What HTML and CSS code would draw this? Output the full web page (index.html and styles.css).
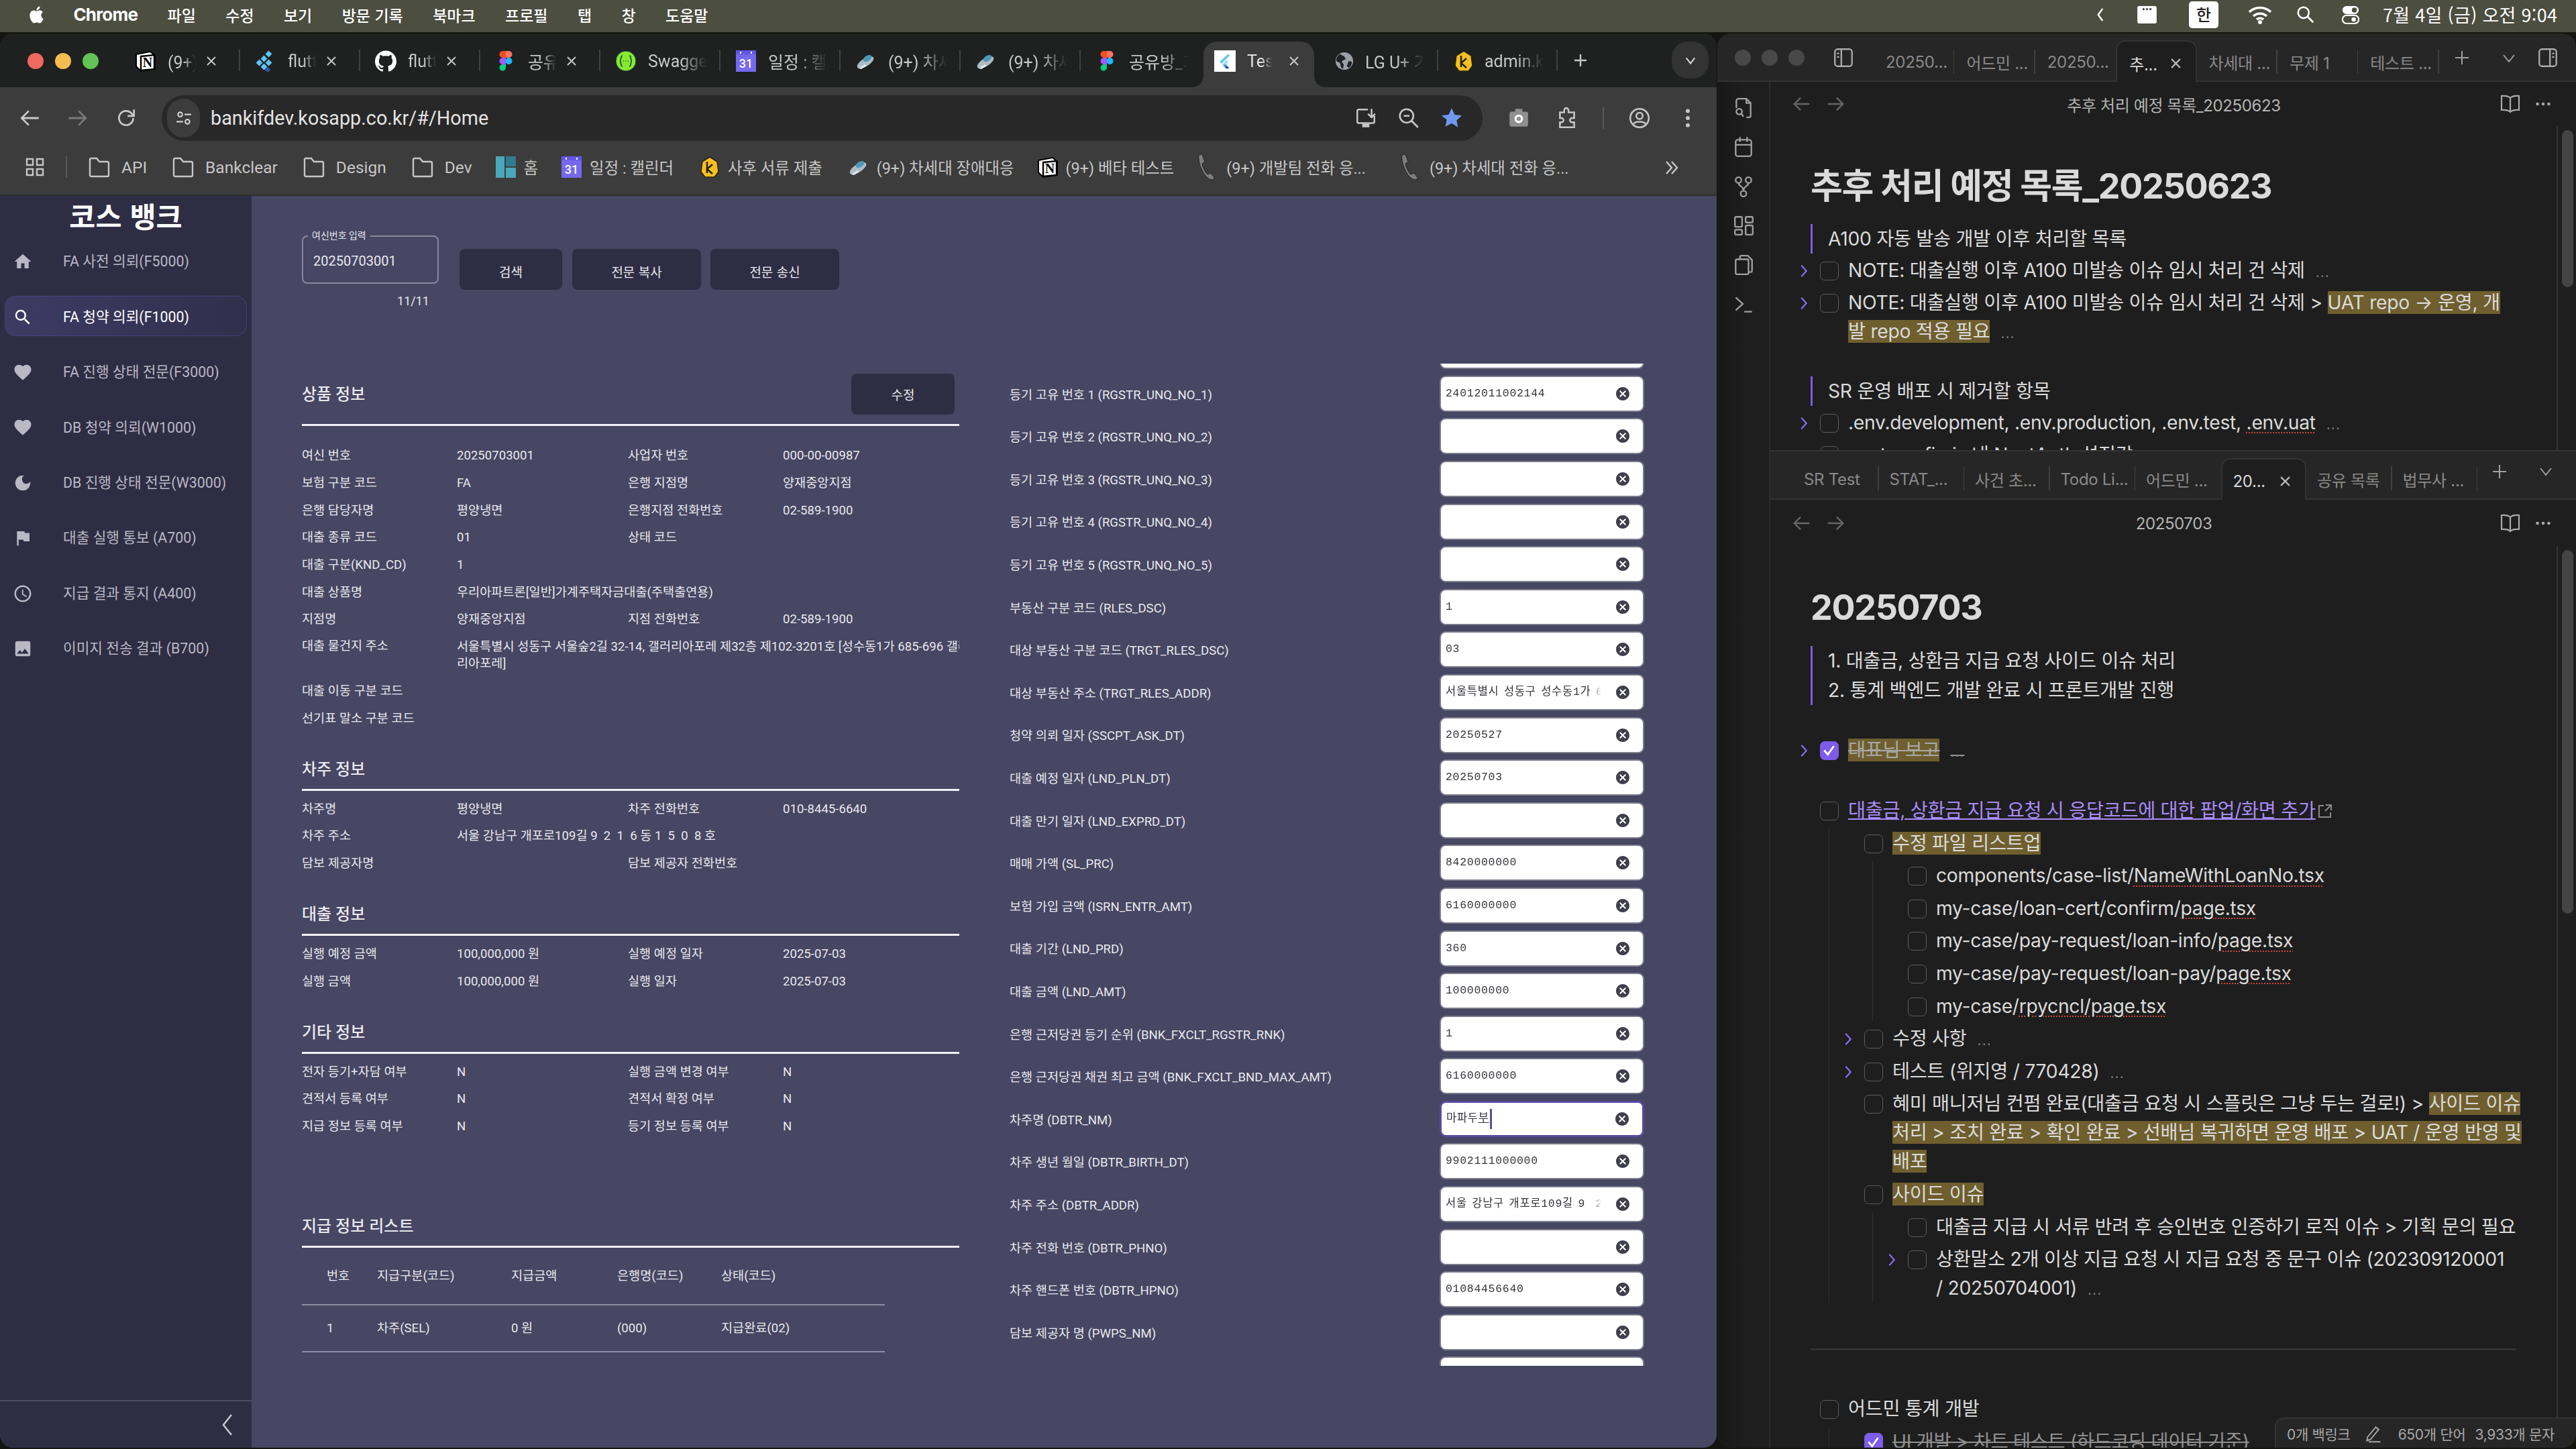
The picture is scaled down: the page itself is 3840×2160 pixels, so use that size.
FILE: index.html
```html
<!DOCTYPE html>
<html lang="ko">
<head>
<meta charset="utf-8">
<title>코스 뱅크</title>
<link rel="stylesheet" href="styles.css">
</head>
<body>
<svg class="defs" aria-hidden="true">
  <symbol id="x" viewBox="0 0 16 16"><path d="M2 2l12 12M14 2L2 14" fill="none" stroke="currentColor" stroke-width="2"/></symbol>
  <symbol id="folder" viewBox="0 0 32 32"><path d="M2 5a2 2 0 0 1 2-2h8l4 5h12a2 2 0 0 1 2 2v18a2 2 0 0 1-2 2H4a2 2 0 0 1-2-2z" fill="none" stroke="#c7c7c7" stroke-width="2.400"/></symbol>
  <symbol id="notion" viewBox="0 0 32 32"><path d="M2 6l21-4 7 6v20l-21 3-7-7z" fill="#fff" stroke="#000" stroke-width="2"/><path d="M9 9l20-2v21l-20 2z" fill="#fff" stroke="#000" stroke-width="2.400"/><text x="19" y="25" class="n-glyph">N</text></symbol>
  <symbol id="flutter" viewBox="0 0 32 32"><g fill="#5cc4f5"><rect x="17" y="2" width="7" height="7" transform="rotate(45 20.500 5.500)"/><rect x="10" y="9" width="7" height="7" transform="rotate(45 13.500 12.500)"/><rect x="3" y="15" width="7" height="7" transform="rotate(45 6.500 18.500)"/><rect x="17" y="15" width="7" height="7" transform="rotate(45 20.500 18.500)"/><rect x="10" y="21" width="7" height="7" transform="rotate(45 13.500 24.500)"/></g><rect x="16" y="26" width="6" height="6" fill="#2d5aa8" transform="rotate(45 19 29)"/></symbol>
  <symbol id="flutter2" viewBox="0 0 32 32"><rect width="32" height="32" fill="#fff"/><path d="M21 5L8 17l3 3L23 8z" fill="#6cc5f2"/><path d="M19 14l-7 7 3 3 6-6z" fill="#a7dcf7"/><path d="M13 22l4 5h5l-4-6z" fill="#4a90d9"/><path d="M17 27h5l-1-2-3-1z" fill="#123a7a"/></symbol>
  <symbol id="github" viewBox="0 0 24 24"><path fill="#fff" d="M12 .297c-6.630 0-12 5.373-12 12 0 5.303 3.438 9.800 8.205 11.385.6.113.82-.258.82-.577 0-.285-.01-1.040-.015-2.040-3.338.724-4.042-1.610-4.042-1.610C4.422 18.070 3.633 17.700 3.633 17.700c-1.087-.744.084-.729.084-.729 1.205.084 1.838 1.236 1.838 1.236 1.070 1.835 2.809 1.305 3.495.998.108-.776.417-1.305.76-1.605-2.665-.3-5.466-1.332-5.466-5.930 0-1.310.465-2.380 1.235-3.220-.135-.303-.54-1.523.105-3.176 0 0 1.005-.322 3.300 1.230.96-.267 1.980-.399 3-.405 1.020.006 2.040.138 3 .405 2.280-1.552 3.285-1.230 3.285-1.230.645 1.653.24 2.873.12 3.176.765.84 1.230 1.910 1.230 3.220 0 4.610-2.805 5.625-5.475 5.920.42.36.81 1.096.81 2.220 0 1.606-.015 2.896-.015 3.286 0 .315.21.69.825.57C20.565 22.092 24 17.592 24 12.297c0-6.627-5.373-12-12-12"/></symbol>
  <symbol id="figma" viewBox="0 0 20 32"><path d="M10 1H5.500a5 5 0 0 0 0 10H10z" fill="#f24e1e"/><path d="M10 1h4.500a5 5 0 0 1 0 10H10z" fill="#ff7262"/><path d="M10 11H5.500a5 5 0 0 0 0 10H10z" fill="#a259ff"/><circle cx="14.500" cy="16" r="5" fill="#1abcfe"/><path d="M5.500 21H10v5a4.800 4.800 0 1 1-4.500-5z" fill="#0acf83"/></symbol>
  <symbol id="swagger" viewBox="0 0 32 32"><circle cx="16" cy="16" r="15" fill="#85ea2d" stroke="#173647" stroke-width="1"/><path d="M11 8c-3 0-2 5-3 7-.5 1-1 1-1 1s.5 0 1 1c1 2 0 7 3 7M21 8c3 0 2 5 3 7 .5 1 1 1 1 1s-.5 0-1 1c-1 2 0 7-3 7M12 16h1M15.500 16h1M19 16h1" fill="none" stroke="#173647" stroke-width="1.600"/></symbol>
  <symbol id="calendar" viewBox="0 0 32 32"><rect x="1" y="0" width="30" height="32" fill="#6255e6"/><rect x="1" y="6" width="30" height="26" fill="#7569ef"/><rect x="7" y="2" width="2" height="3" fill="#fff"/><rect x="23" y="2" width="2" height="3" fill="#fff"/><text x="16" y="26" class="cal-glyph">31</text></symbol>
  <symbol id="kakao" viewBox="0 0 28 32"><path d="M14 1l11 7 2 15-6 8H7l-6-8 2-15z" fill="#f6c021" stroke="#2a2411" stroke-width="1.500"/><path d="M10 8v17M18 12l-8 7 8 7" fill="none" stroke="#2a2411" stroke-width="2.600"/></symbol>
  <symbol id="ufo" viewBox="0 0 32 32"><ellipse cx="15" cy="18" rx="14" ry="6" fill="#aebcc4" transform="rotate(-32 15 18)"/><ellipse cx="18" cy="12" rx="7" ry="4" fill="#4f96b8" transform="rotate(-32 18 12)"/><path d="M5 27l9-6 3 2-8 5z" fill="#e4eaed"/></symbol>
  <symbol id="phone" viewBox="0 0 32 40"><path d="M3 2l5-1 4 11-4 3c1 6 4 12 8 16l5-2 6 8-4 2C12 39 1 15 3 2z" fill="#7d7d7d" stroke="#222" stroke-width="1"/></symbol>
  <symbol id="home-logo" viewBox="0 0 30 32"><rect x="0" y="0" width="13" height="32" fill="#4aa8bb"/><rect x="15" y="0" width="15" height="15" fill="#2f7b90"/><rect x="15" y="17" width="15" height="15" fill="#4aa8bb"/></symbol>
  <symbol id="globe" viewBox="0 0 30 32"><circle cx="15" cy="16" r="14" fill="#9aa0a6"/><path d="M8 5c4 2 7 3 9 7-1 3-5 2-6 5l3 5-1 6-3-1-2-8-6-3c0-5 2-9 6-11zM22 16l5 1c0 5-2 8-5 10l-3-3z" fill="#202124"/></symbol>
  <symbol id="back" viewBox="0 0 32 32"><path d="M28 16H5M14 6L4 16l10 10" fill="none" stroke="currentColor" stroke-width="2.600"/></symbol>
  <symbol id="fwd" viewBox="0 0 32 32"><path d="M4 16h23M18 6l10 10-10 10" fill="none" stroke="currentColor" stroke-width="2.600"/></symbol>
  <symbol id="ob-left" viewBox="0 0 32 32"><path d="M24 4H8a4 4 0 0 0-4 4v16a4 4 0 0 0 4 4h16a4 4 0 0 0 4-4V8a4 4 0 0 0-4-4zM13 4v24M7 10h3M7 15h3" fill="none" stroke="currentColor" stroke-width="2.200"/></symbol>
  <symbol id="ob-right" viewBox="0 0 32 32"><path d="M8 4h16a4 4 0 0 1 4 4v16a4 4 0 0 1-4 4H8a4 4 0 0 1-4-4V8a4 4 0 0 1 4-4zM19 4v24M22 10h3M22 15h3" fill="none" stroke="currentColor" stroke-width="2.200"/></symbol>
  <symbol id="book" viewBox="0 0 32 32"><path d="M16 7C13 4 8 3.500 3 4v21c5-.5 10 0 13 3 3-3 8-3.500 13-3V4c-5-.5-10 0-13 3zM16 7v21" fill="none" stroke="currentColor" stroke-width="2.200"/></symbol>
  <symbol id="dots" viewBox="0 0 32 32"><circle cx="7" cy="16" r="2.500" fill="currentColor"/><circle cx="16" cy="16" r="2.500" fill="currentColor"/><circle cx="25" cy="16" r="2.500" fill="currentColor"/></symbol>
  <symbol id="chev" viewBox="0 0 14 24"><path d="M3 3l8 9-8 9" fill="none" stroke="#8b6cf0" stroke-width="2.400"/></symbol>
  <symbol id="check" viewBox="0 0 28 28"><path d="M6 14l6 7 10-14" fill="none" stroke="#fff" stroke-width="3.200"/></symbol>
  <symbol id="clear" viewBox="0 0 24 24"><path fill="#403f4c" d="M12 2C6.470 2 2 6.470 2 12s4.470 10 10 10 10-4.470 10-10S17.530 2 12 2zm5 13.590L15.590 17 12 13.410 8.410 17 7 15.590 10.590 12 7 8.410 8.410 7 12 10.590 15.590 7 17 8.410 13.410 12 17 15.590z"/></symbol>
</svg>

<header class="menubar">
  <svg class="apple" viewBox="0 0 24 24"><path fill="#fff" d="M12.152 6.896c-.948 0-2.415-1.078-3.960-1.040-2.040.027-3.910 1.183-4.961 3.014-2.117 3.675-.546 9.103 1.519 12.090 1.013 1.454 2.208 3.090 3.792 3.039 1.520-.065 2.090-.987 3.935-.987 1.831 0 2.350.987 3.960.948 1.637-.026 2.676-1.480 3.676-2.948 1.156-1.688 1.636-3.325 1.662-3.415-.039-.013-3.182-1.221-3.220-4.857-.026-3.040 2.480-4.494 2.597-4.559-1.429-2.090-3.623-2.324-4.390-2.376-2-.156-3.675 1.090-4.610 1.090zM15.530 3.830c.843-1.012 1.400-2.427 1.245-3.830-1.207.052-2.662.805-3.532 1.818-.780.896-1.454 2.338-1.273 3.714 1.338.104 2.715-.688 3.559-1.701"/></svg>
  <span class="menu-app">Chrome</span>
  <span>파일</span><span>수정</span><span>보기</span><span>방문 기록</span><span>북마크</span><span>프로필</span><span>탭</span><span>창</span><span>도움말</span>
  <div class="status">
    <svg class="st-i st-chev" viewBox="0 0 16 32"><path d="M12 5L4 16l8 11" fill="none" stroke="#fff" stroke-width="3"/></svg>
    <svg class="st-i st-box" viewBox="0 0 31 28"><rect width="31" height="28" rx="3" fill="#fff"/><circle cx="10" cy="5" r="1.800" fill="#444"/><circle cx="15.500" cy="5" r="1.800" fill="#444"/><circle cx="21" cy="5" r="1.800" fill="#444"/></svg>
    <span class="st-han">한</span>
    <svg class="st-i st-wifi" viewBox="0 0 36 30"><path d="M2 11a23 23 0 0 1 32 0M8 17a15 15 0 0 1 20 0M13 22a8 8 0 0 1 10 0" fill="none" stroke="#fff" stroke-width="3.600"/><circle cx="18" cy="26" r="3" fill="#fff"/></svg>
    <svg class="st-i st-search" viewBox="0 0 30 30"><circle cx="12" cy="12" r="9" fill="none" stroke="#fff" stroke-width="2.800"/><path d="M19 19l9 9" stroke="#fff" stroke-width="3.200"/></svg>
    <svg class="st-i st-ctl" viewBox="0 0 30 30"><rect x="2" y="1" width="26" height="13" rx="6.500" fill="#fff"/><circle cx="21" cy="7.500" r="4" fill="#4c4e40"/><rect x="2" y="16" width="26" height="13" rx="6.500" fill="none" stroke="#fff" stroke-width="2.400"/><circle cx="20" cy="22.500" r="3.500" fill="#fff"/></svg>
    <span class="st-clock">7월 4일 (금) 오전 9:04</span>
  </div>
</header>

<div class="window chrome">
  <div class="tabstrip">
    <div class="lights"><i class="l-red"></i><i class="l-yel"></i><i class="l-grn"></i></div>
    <div class="tab"><svg class="fav"><use href="#notion"/></svg><span class="t-text">(9+) 베타 테스트</span><svg class="t-x"><use href="#x"/></svg></div>
    <div class="tab"><svg class="fav"><use href="#flutter"/></svg><span class="t-text">flutter</span><svg class="t-x"><use href="#x"/></svg></div>
    <div class="tab"><svg class="fav"><use href="#github"/></svg><span class="t-text">flutter</span><svg class="t-x"><use href="#x"/></svg></div>
    <div class="tab"><svg class="fav"><use href="#figma"/></svg><span class="t-text">공유방_기획</span><svg class="t-x"><use href="#x"/></svg></div>
    <div class="tab"><svg class="fav"><use href="#swagger"/></svg><span class="t-text t-wide">Swagger UI</span></div>
    <div class="tab"><svg class="fav"><use href="#calendar"/></svg><span class="t-text t-wide">일정 : 캘린더</span></div>
    <div class="tab"><svg class="fav"><use href="#ufo"/></svg><span class="t-text t-wide">(9+) 차세대 장애대응</span></div>
    <div class="tab"><svg class="fav"><use href="#ufo"/></svg><span class="t-text t-wide">(9+) 차세대 장애대응</span></div>
    <div class="tab tab--plain"><svg class="fav"><use href="#figma"/></svg><span class="t-text t-wide">공유방_기획</span></div>
    <div class="tab tab--active"><svg class="fav"><use href="#flutter2"/></svg><span class="t-text t-short">Test</span><svg class="t-x"><use href="#x"/></svg></div>
    <div class="tab tab--lg"><svg class="fav"><use href="#globe"/></svg><span class="t-text t-wide">LG U+ 기업</span></div>
    <div class="tab tab--k"><svg class="fav"><use href="#kakao"/></svg><span class="t-text t-wide">admin.kosapp</span></div>
    <svg class="t-plus" viewBox="0 0 24 24"><path d="M12 3v18M3 12h18" stroke="#c7c7c7" stroke-width="2.400"/></svg>
    <div class="t-down"><svg viewBox="0 0 20 20"><path d="M3 6l7 9 7-9" fill="none" stroke="#d0d0d0" stroke-width="2.400"/></svg></div>
  </div>

  <div class="toolbar">
    <svg class="tb-i tb-back"><use href="#back"/></svg>
    <svg class="tb-i tb-fwd"><use href="#fwd"/></svg>
    <svg class="tb-i tb-reload" viewBox="0 0 32 32"><path d="M26 16a10 10 0 1 1-3-7.200L27 13M27 4v9h-9" fill="none" stroke="#c7c7c7" stroke-width="2.600"/></svg>
    <div class="omnibox">
      <span class="omni-site"><svg viewBox="0 0 24 24"><circle cx="7" cy="7" r="3" fill="none" stroke="#d0d0d0" stroke-width="2"/><path d="M13 7h9M2 17h9" stroke="#d0d0d0" stroke-width="2"/><circle cx="17" cy="17" r="3" fill="none" stroke="#d0d0d0" stroke-width="2"/></svg></span>
      <span class="omni-url">bankifdev.kosapp.co.kr/#/Home</span>
      <span class="omni-icons">
        <svg viewBox="0 0 32 32"><path d="M19 4H6a2 2 0 0 0-2 2v15a2 2 0 0 0 2 2h20a2 2 0 0 0 2-2V13M24 3v12M19 10l5 5 5-5" fill="none" stroke="#c7c7c7" stroke-width="2.400"/><path d="M11 24h10v5H11z" fill="#c7c7c7"/></svg>
        <svg viewBox="0 0 32 32"><circle cx="13" cy="13" r="9.500" fill="none" stroke="#c7c7c7" stroke-width="2.400"/><path d="M20 20l9 9" stroke="#c7c7c7" stroke-width="2.600"/><path d="M9 13h8" stroke="#c7c7c7" stroke-width="2.400"/></svg>
        <svg viewBox="0 0 32 32"><path d="M16 2l4.300 9.200 10 1.200-7.400 6.800 2 9.800L16 23.200 7.100 28l2-9.800L1.700 12.400l10-1.200z" fill="#6e99ee"/></svg>
      </span>
    </div>
    <svg class="tb-i tb-cam" viewBox="0 0 32 32"><rect x="3" y="7" width="26" height="21" rx="3" fill="#8f8f8f"/><rect x="11" y="3" width="10" height="6" rx="1" fill="#8f8f8f"/><circle cx="16" cy="17" r="6" fill="#fff"/><circle cx="16" cy="17" r="3" fill="#8f8f8f"/></svg>
    <svg class="tb-i tb-ext" viewBox="0 0 32 32"><path d="M6 8h6V5a3 3 0 0 1 6 0v3h8v8h-3a3 3 0 0 0 0 6h3v7H6v-7h2a3 3 0 0 0 0-6H6z" fill="none" stroke="#c7c7c7" stroke-width="2.400"/></svg>
    <span class="tb-sep"></span>
    <svg class="tb-i tb-prof" viewBox="0 0 32 32"><circle cx="16" cy="16" r="13" fill="none" stroke="#c7c7c7" stroke-width="2.400"/><circle cx="16" cy="13" r="4.500" fill="none" stroke="#c7c7c7" stroke-width="2.400"/><path d="M7 25c2-5 16-5 18 0" fill="none" stroke="#c7c7c7" stroke-width="2.400"/></svg>
    <svg class="tb-i tb-more" viewBox="0 0 32 32"><circle cx="16" cy="6" r="2.800" fill="#c7c7c7"/><circle cx="16" cy="16" r="2.800" fill="#c7c7c7"/><circle cx="16" cy="26" r="2.800" fill="#c7c7c7"/></svg>
  </div>

  <div class="bookmarks">
    <svg class="bm-apps" viewBox="0 0 28 28"><g fill="none" stroke="#c7c7c7" stroke-width="2.400"><rect x="2" y="2" width="9" height="9"/><rect x="17" y="2" width="9" height="9"/><rect x="2" y="17" width="9" height="9"/><rect x="17" y="17" width="9" height="9"/></g></svg>
    <span class="bm-sep"></span>
    <span class="bm"><svg class="bm-f"><use href="#folder"/></svg>API</span>
    <span class="bm"><svg class="bm-f"><use href="#folder"/></svg>Bankclear</span>
    <span class="bm"><svg class="bm-f"><use href="#folder"/></svg>Design</span>
    <span class="bm bm--tight"><svg class="bm-f"><use href="#folder"/></svg>Dev</span>
    <span class="bm bm--tight bm--logo"><svg class="bm-f"><use href="#home-logo"/></svg>홈</span>
    <span class="bm bm--logo"><svg class="bm-f"><use href="#calendar"/></svg>일정 : 캘린더</span>
    <span class="bm bm--logo"><svg class="bm-f"><use href="#kakao"/></svg>사후 서류 제출</span>
    <span class="bm bm--tight bm--logo"><svg class="bm-f"><use href="#ufo"/></svg>(9+) 차세대 장애대응</span>
    <span class="bm bm--tight bm--logo"><svg class="bm-f"><use href="#notion"/></svg>(9+) 베타 테스트</span>
    <span class="bm bm--long bm--logo"><svg class="bm-f bm-ph"><use href="#phone"/></svg>(9+) 개발팀 전화 응...</span>
    <span class="bm bm--logo"><svg class="bm-f bm-ph"><use href="#phone"/></svg>(9+) 차세대 전화 응...</span>
    <svg class="bm-more" viewBox="0 0 24 24"><path d="M5 3l8 9-8 9M13 3l8 9-8 9" fill="none" stroke="#c7c7c7" stroke-width="2.400"/></svg>
  </div>

  <div class="app">
    <aside class="side">
      <h1 class="side-title">코스 뱅크</h1>
      <nav class="side-nav">
        <a class="nav"><svg viewBox="0 0 24 24"><path d="M10 20v-6h4v6h5v-8h3L12 3 2 12h3v8z"/></svg>FA 사전 의뢰(F5000)</a>
        <a class="nav nav--on"><svg viewBox="0 0 24 24"><path d="M15.500 14h-.79l-.28-.27A6.471 6.471 0 0 0 16 9.500 6.500 6.500 0 1 0 9.500 16c1.610 0 3.090-.59 4.230-1.570l.27.28v.79l5 4.990L20.490 19l-4.990-5zm-6 0C7.010 14 5 11.990 5 9.500S7.010 5 9.500 5 14 7.010 14 9.500 11.990 14 9.500 14z"/></svg>FA 청약 의뢰(F1000)</a>
        <a class="nav"><svg viewBox="0 0 24 24"><path d="M12 21.350l-1.450-1.320C5.400 15.360 2 12.280 2 8.500 2 5.420 4.420 3 7.500 3c1.740 0 3.410.81 4.500 2.090C13.090 3.810 14.760 3 16.500 3 19.580 3 22 5.420 22 8.500c0 3.780-3.400 6.860-8.550 11.540L12 21.350z"/></svg>FA 진행 상태 전문(F3000)</a>
        <a class="nav"><svg viewBox="0 0 24 24"><path d="M12 21.350l-1.450-1.320C5.400 15.360 2 12.280 2 8.500 2 5.420 4.420 3 7.500 3c1.740 0 3.410.81 4.500 2.090C13.090 3.810 14.760 3 16.500 3 19.580 3 22 5.420 22 8.500c0 3.780-3.400 6.860-8.550 11.540L12 21.350z"/></svg>DB 청약 의뢰(W1000)</a>
        <a class="nav"><svg viewBox="0 0 24 24"><path d="M12 3a9 9 0 1 0 9 9c0-.46-.04-.92-.1-1.360a5.389 5.389 0 0 1-4.400 2.260 5.403 5.403 0 0 1-3.140-9.800c-.44-.06-.9-.1-1.360-.1z"/></svg>DB 진행 상태 전문(W3000)</a>
        <a class="nav"><svg viewBox="0 0 24 24"><path d="M14.400 6L14 4H5v17h2v-7h5.600l.4 2h7V6z"/></svg>대출 실행 통보 (A700)</a>
        <a class="nav"><svg viewBox="0 0 24 24"><path d="M11.990 2C6.470 2 2 6.480 2 12s4.470 10 9.990 10C17.520 22 22 17.520 22 12S17.520 2 11.990 2zM12 20c-4.420 0-8-3.580-8-8s3.580-8 8-8 8 3.580 8 8-3.580 8-8 8zm.5-13H11v6l5.250 3.150.75-1.230-4.500-2.670z"/></svg>지급 결과 통지 (A400)</a>
        <a class="nav"><svg viewBox="0 0 24 24"><path d="M21 19V5c0-1.100-.9-2-2-2H5c-1.100 0-2 .9-2 2v14c0 1.100.9 2 2 2h14c1.100 0 2-.9 2-2zM8.500 13.500l2.500 3.010L14.500 12l4.500 6H5l3.500-4.500z"/></svg>이미지 전송 결과 (B700)</a>
      </nav>
      <div class="side-foot"><svg viewBox="0 0 20 36"><path d="M16 3L4 18l12 15" fill="none" stroke="#c5c4ce" stroke-width="2.600"/></svg></div>
    </aside>

    <main class="main">
      <div class="col-left">
        <div class="search">
          <div class="search-box">
            <div class="outlined"><span class="legend">여신번호 입력</span>20250703001</div>
            <div class="counter">11/11</div>
          </div>
          <button class="btn btn--a">검색</button>
          <button class="btn btn--b">전문 복사</button>
          <button class="btn btn--b">전문 송신</button>
        </div>

        <section>
          <div class="sec-head sec-head--btn"><span>상품 정보</span><button class="btn btn--edit">수정</button></div>
          <div class="kv kv--first">
            <span>여신 번호</span><span>20250703001</span><span>사업자 번호</span><span>000-00-00987</span>
            <span>보험 구분 코드</span><span>FA</span><span>은행 지점명</span><span>양재중앙지점</span>
            <span>은행 담당자명</span><span>평양냉면</span><span>은행지점 전화번호</span><span>02-589-1900</span>
            <span>대출 종류 코드</span><span>01</span><span>상태 코드</span><span></span>
            <span>대출 구분(KND_CD)</span><span>1</span><span></span><span></span>
            <span>대출 상품명</span><span class="wide">우리아파트론[일반]가계주택자금대출(주택출연용)</span>
            <span>지점명</span><span>양재중앙지점</span><span>지점 전화번호</span><span>02-589-1900</span>
            <span class="top">대출 물건지 주소</span><span class="wide addr">서울특별시 성동구 서울숲2길 32-14, 갤러리아포레 제32층 제102-3201호 [성수동1가 685-696 갤러<br>리아포레]</span>
            <span>대출 이동 구분 코드</span><span class="wide"></span>
            <span>선기표 말소 구분 코드</span><span class="wide"></span>
          </div>
        </section>

        <section class="sec">
          <div class="sec-head"><span>차주 정보</span></div>
          <div class="kv">
            <span>차주명</span><span>평양냉면</span><span>차주 전화번호</span><span>010-8445-6640</span>
            <span>차주 주소</span><span class="wide">서울 강남구 개포로109길 9 &nbsp;2 &nbsp;1 &nbsp;6 동 1 &nbsp;5 &nbsp;0 &nbsp;8 호</span>
            <span>담보 제공자명</span><span></span><span>담보 제공자 전화번호</span><span></span>
          </div>
        </section>

        <section class="sec">
          <div class="sec-head"><span>대출 정보</span></div>
          <div class="kv">
            <span>실행 예정 금액</span><span>100,000,000 원</span><span>실행 예정 일자</span><span>2025-07-03</span>
            <span>실행 금액</span><span>100,000,000 원</span><span>실행 일자</span><span>2025-07-03</span>
          </div>
        </section>

        <section class="sec">
          <div class="sec-head"><span>기타 정보</span></div>
          <div class="kv">
            <span>전자 등기+자담 여부</span><span>N</span><span>실행 금액 변경 여부</span><span>N</span>
            <span>견적서 등록 여부</span><span>N</span><span>견적서 확정 여부</span><span>N</span>
            <span>지급 정보 등록 여부</span><span>N</span><span>등기 정보 등록 여부</span><span>N</span>
          </div>
        </section>

        <section class="sec sec--list">
          <div class="sec-head"><span>지급 정보 리스트</span></div>
          <div class="tbl tbl--head"><span>번호</span><span>지급구분(코드)</span><span>지급금액</span><span>은행명(코드)</span><span>상태(코드)</span></div>
          <div class="tbl"><span>1</span><span>차주(SEL)</span><span>0 원</span><span>(000)</span><span>지급완료(02)</span></div>
        </section>
      </div>

      <div class="col-right">
        <div class="form">
          <div class="frow"><label>등기 고유 번호 (RGSTR_UNQ_NO)</label><div class="field"><span class="val"></span></div></div>
          <div class="frow"><label>등기 고유 번호 1 (RGSTR_UNQ_NO_1)</label><div class="field"><span class="val">24012011002144</span><svg class="clr"><use href="#clear"/></svg></div></div>
          <div class="frow"><label>등기 고유 번호 2 (RGSTR_UNQ_NO_2)</label><div class="field"><span class="val"></span><svg class="clr"><use href="#clear"/></svg></div></div>
          <div class="frow"><label>등기 고유 번호 3 (RGSTR_UNQ_NO_3)</label><div class="field"><span class="val"></span><svg class="clr"><use href="#clear"/></svg></div></div>
          <div class="frow"><label>등기 고유 번호 4 (RGSTR_UNQ_NO_4)</label><div class="field"><span class="val"></span><svg class="clr"><use href="#clear"/></svg></div></div>
          <div class="frow"><label>등기 고유 번호 5 (RGSTR_UNQ_NO_5)</label><div class="field"><span class="val"></span><svg class="clr"><use href="#clear"/></svg></div></div>
          <div class="frow"><label>부동산 구분 코드 (RLES_DSC)</label><div class="field"><span class="val">1</span><svg class="clr"><use href="#clear"/></svg></div></div>
          <div class="frow"><label>대상 부동산 구분 코드 (TRGT_RLES_DSC)</label><div class="field"><span class="val">03</span><svg class="clr"><use href="#clear"/></svg></div></div>
          <div class="frow"><label>대상 부동산 주소 (TRGT_RLES_ADDR)</label><div class="field"><span class="val">서울특별시 성동구 성수동1가 685</span><svg class="clr"><use href="#clear"/></svg></div></div>
          <div class="frow"><label>청약 의뢰 일자 (SSCPT_ASK_DT)</label><div class="field"><span class="val">20250527</span><svg class="clr"><use href="#clear"/></svg></div></div>
          <div class="frow"><label>대출 예정 일자 (LND_PLN_DT)</label><div class="field"><span class="val">20250703</span><svg class="clr"><use href="#clear"/></svg></div></div>
          <div class="frow"><label>대출 만기 일자 (LND_EXPRD_DT)</label><div class="field"><span class="val"></span><svg class="clr"><use href="#clear"/></svg></div></div>
          <div class="frow"><label>매매 가액 (SL_PRC)</label><div class="field"><span class="val">8420000000</span><svg class="clr"><use href="#clear"/></svg></div></div>
          <div class="frow"><label>보험 가입 금액 (ISRN_ENTR_AMT)</label><div class="field"><span class="val">6160000000</span><svg class="clr"><use href="#clear"/></svg></div></div>
          <div class="frow"><label>대출 기간 (LND_PRD)</label><div class="field"><span class="val">360</span><svg class="clr"><use href="#clear"/></svg></div></div>
          <div class="frow"><label>대출 금액 (LND_AMT)</label><div class="field"><span class="val">100000000</span><svg class="clr"><use href="#clear"/></svg></div></div>
          <div class="frow"><label>은행 근저당권 등기 순위 (BNK_FXCLT_RGSTR_RNK)</label><div class="field"><span class="val">1</span><svg class="clr"><use href="#clear"/></svg></div></div>
          <div class="frow"><label>은행 근저당권 채권 최고 금액 (BNK_FXCLT_BND_MAX_AMT)</label><div class="field"><span class="val">6160000000</span><svg class="clr"><use href="#clear"/></svg></div></div>
          <div class="frow"><label>차주명 (DBTR_NM)</label><div class="field field--focus"><span class="val"><span class="val-inline">마파두<u>부</u></span><i class="caret"></i></span><svg class="clr"><use href="#clear"/></svg></div></div>
          <div class="frow"><label>차주 생년 월일 (DBTR_BIRTH_DT)</label><div class="field"><span class="val">9902111000000</span><svg class="clr"><use href="#clear"/></svg></div></div>
          <div class="frow"><label>차주 주소 (DBTR_ADDR)</label><div class="field"><span class="val">서울 강남구 개포로109길 9 &nbsp;2</span><svg class="clr"><use href="#clear"/></svg></div></div>
          <div class="frow"><label>차주 전화 번호 (DBTR_PHNO)</label><div class="field"><span class="val"></span><svg class="clr"><use href="#clear"/></svg></div></div>
          <div class="frow"><label>차주 핸드폰 번호 (DBTR_HPNO)</label><div class="field"><span class="val">01084456640</span><svg class="clr"><use href="#clear"/></svg></div></div>
          <div class="frow"><label>담보 제공자 명 (PWPS_NM)</label><div class="field"><span class="val"></span><svg class="clr"><use href="#clear"/></svg></div></div>
          <div class="frow"><label>담보 제공자 번호 (PWPS_NO)</label><div class="field"><span class="val"></span></div></div>
        </div>
      </div>
    </main>
  </div>
</div>

<div class="window obsidian">
  <div class="ob-bar">
    <div class="lights lights--off"><i></i><i></i><i></i></div>
    <svg class="ob-ic ob-panel"><use href="#ob-left"/></svg>
    <div class="ob-tabs">
      <span class="ob-tab">20250...</span><span class="ob-tab">어드민 ...</span><span class="ob-tab ob-tab--pre">20250...</span>
      <span class="ob-tab ob-tab--on">추...<svg class="ob-x"><use href="#x"/></svg></span>
      <span class="ob-tab">차세대 ...</span><span class="ob-tab">무제 1</span><span class="ob-tab">테스트 ...</span>
    </div>
    <svg class="ob-plus" viewBox="0 0 24 24"><path d="M12 2v20M2 12h20" stroke="#a0a0a0" stroke-width="2"/></svg>
    <svg class="ob-down" viewBox="0 0 20 20"><path d="M2 5l8 10 8-10" fill="none" stroke="#a0a0a0" stroke-width="2"/></svg>
    <svg class="ob-ic ob-panel-r"><use href="#ob-right"/></svg>
  </div>
  <div class="ob-body">
    <div class="ribbon">
      <svg viewBox="0 0 32 32"><path d="M8 3h12l6 6v18a2 2 0 0 1-2 2h-4M20 3v6h6M6 16v-9a4 4 0 0 1 2-4" fill="none" stroke="currentColor" stroke-width="2.200"/><circle cx="10" cy="21" r="4" fill="none" stroke="currentColor" stroke-width="2.200"/><path d="M13 24l3 4" stroke="currentColor" stroke-width="2.200"/></svg>
      <svg viewBox="0 0 32 32"><rect x="5" y="6" width="22" height="23" rx="3" fill="none" stroke="currentColor" stroke-width="2.200"/><path d="M11 2v7M21 2v7M5 13h22" stroke="currentColor" stroke-width="2.200"/></svg>
      <svg viewBox="0 0 32 32"><g fill="none" stroke="currentColor" stroke-width="2.200"><circle cx="9" cy="7" r="4"/><circle cx="23" cy="7" r="4"/><circle cx="16" cy="26" r="4"/><path d="M9 11c0 5 7 4 7 11M23 11c0 5-7 4-7 11"/></g></svg>
      <svg viewBox="0 0 32 32"><g fill="none" stroke="currentColor" stroke-width="2.200"><rect x="4" y="4" width="10" height="14" rx="1.500"/><rect x="19" y="4" width="10" height="8" rx="1.500"/><rect x="19" y="16" width="10" height="13" rx="1.500"/><rect x="4" y="22" width="10" height="7" rx="1.500"/></g></svg>
      <svg viewBox="0 0 32 32"><g fill="none" stroke="currentColor" stroke-width="2.200"><path d="M11 8V5a2 2 0 0 1 2-2h9l6 6v15a2 2 0 0 1-2 2h-3"/><rect x="5" y="8" width="18" height="21" rx="2"/></g></svg>
      <svg viewBox="0 0 32 32"><path d="M5 7l10 9-10 9M17 27h11" fill="none" stroke="currentColor" stroke-width="2.200"/></svg>
    </div>
    <div class="panes">
      <section class="pane pane--top">
        <div class="pane-nav">
          <svg class="p-nav"><use href="#back"/></svg><svg class="p-nav"><use href="#fwd"/></svg>
          <span class="p-title">추후 처리 예정 목록_20250623</span>
          <svg class="p-i"><use href="#book"/></svg><svg class="p-i p-dots"><use href="#dots"/></svg>
        </div>
        <div class="doc">
          <h2 class="doc-h">추후 처리 예정 목록_20250623</h2>
          <blockquote class="bq">A100 자동 발송 개발 이후 처리할 목록</blockquote>
          <div class="task"><svg class="chev"><use href="#chev"/></svg><i class="cb"></i><div>NOTE: 대출실행 이후 A100 미발송 이슈 임시 처리 건 삭제<em class="more">...</em></div></div>
          <div class="task"><svg class="chev"><use href="#chev"/></svg><i class="cb"></i><div>NOTE: 대출실행 이후 A100 미발송 이슈 임시 처리 건 삭제 &gt; <mark>UAT repo → 운영, 개<br>발 repo 적용 필요</mark><em class="more">...</em></div></div>
          <blockquote class="bq bq--gap">SR 운영 배포 시 제거할 항목</blockquote>
          <div class="task"><svg class="chev"><use href="#chev"/></svg><i class="cb"></i><div>.env.development, .env.production, .env.test, <span class="sp">.env.uat</span><em class="more">...</em></div></div>
          <div class="task"><span class="chev-gap"></span><i class="cb"></i><div>next.config.js 내 NextAuth 설정값</div></div>
        </div>
        <span class="scroll scroll--top"><i></i></span>
      </section>

      <section class="pane pane--bot">
        <div class="pane-tabs">
          <span class="ob-tab ob-tab--b">SR Test</span><span class="ob-tab ob-tab--b">STAT_...</span><span class="ob-tab ob-tab--b">사건 초...</span><span class="ob-tab ob-tab--b">Todo Li...</span><span class="ob-tab ob-tab--b ob-tab--pre">어드민 ...</span>
          <span class="ob-tab ob-tab--b ob-tab--on">20...<svg class="ob-x"><use href="#x"/></svg></span>
          <span class="ob-tab ob-tab--b">공유 목록</span><span class="ob-tab ob-tab--b">법무사 ...</span>
          <svg class="ob-plus ob-plus--b" viewBox="0 0 24 24"><path d="M12 2v20M2 12h20" stroke="#a0a0a0" stroke-width="2"/></svg>
          <svg class="ob-down ob-down--b" viewBox="0 0 20 20"><path d="M2 5l8 10 8-10" fill="none" stroke="#a0a0a0" stroke-width="2"/></svg>
        </div>
        <div class="pane-nav pane-nav--b">
          <svg class="p-nav"><use href="#back"/></svg><svg class="p-nav"><use href="#fwd"/></svg>
          <span class="p-title">20250703</span>
          <svg class="p-i"><use href="#book"/></svg><svg class="p-i p-dots"><use href="#dots"/></svg>
        </div>
        <div class="doc doc--b">
          <h2 class="doc-h">20250703</h2>
          <blockquote class="bq">1. 대출금, 상환금 지급 요청 사이드 이슈 처리<br>2. 통계 백엔드 개발 완료 시 프론트개발 진행</blockquote>
          <div class="task task--big"><svg class="chev"><use href="#chev"/></svg><i class="cb cb--on"><svg><use href="#check"/></svg></i><div class="done"><mark>대표님 보고</mark><em class="more">...</em></div></div>
          <div class="task task--big"><span class="chev-gap"></span><i class="cb"></i><div><a class="link">대출금, 상환금 지급 요청 시 응답코드에 대한 팝업/화면 추가</a><svg class="ext" viewBox="0 0 24 24"><path d="M10 4H3v17h17v-7M13 3h8v8M21 3l-9 9" fill="none" stroke="#8a8a8a" stroke-width="2"/></svg></div></div>
          <div class="tree">
            <div class="task"><span class="chev-gap"></span><i class="cb"></i><div><mark>수정 파일 리스트업</mark></div></div>
            <div class="tree tree--2">
              <div class="task"><span class="chev-gap"></span><i class="cb"></i><div>components/case-list/<span class="sp">NameWithLoanNo.tsx</span></div></div>
              <div class="task"><span class="chev-gap"></span><i class="cb"></i><div>my-case/loan-cert/confirm/<span class="sp">page.tsx</span></div></div>
              <div class="task"><span class="chev-gap"></span><i class="cb"></i><div>my-case/pay-request/loan-info/<span class="sp">page.tsx</span></div></div>
              <div class="task"><span class="chev-gap"></span><i class="cb"></i><div>my-case/pay-request/loan-pay/<span class="sp">page.tsx</span></div></div>
              <div class="task"><span class="chev-gap"></span><i class="cb"></i><div>my-case/<span class="sp">rpycncl/page.tsx</span></div></div>
            </div>
            <div class="task"><svg class="chev"><use href="#chev"/></svg><i class="cb"></i><div>수정 사항<em class="more">...</em></div></div>
            <div class="task"><svg class="chev"><use href="#chev"/></svg><i class="cb"></i><div>테스트 (위지영 / 770428)<em class="more">...</em></div></div>
            <div class="task"><span class="chev-gap"></span><i class="cb"></i><div>혜미 매니저님 컨펌 완료(대출금 요청 시 스플릿은 그냥 두는 걸로!) &gt; <mark>사이드 이슈<br>처리 &gt; 조치 완료 &gt; 확인 완료 &gt; 선배님 복귀하면 운영 배포 &gt; UAT / 운영 반영 및<br>배포</mark></div></div>
            <div class="task"><span class="chev-gap"></span><i class="cb"></i><div><mark>사이드 이슈</mark></div></div>
            <div class="tree tree--2">
              <div class="task"><span class="chev-gap"></span><i class="cb"></i><div>대출금 지급 시 서류 반려 후 승인번호 인증하기 로직 이슈 &gt; 기획 문의 필요</div></div>
              <div class="task"><svg class="chev"><use href="#chev"/></svg><i class="cb"></i><div>상환말소 2개 이상 지급 요청 시 지급 요청 중 문구 이슈 (202309120001<br>/ 20250704001)<em class="more">...</em></div></div>
            </div>
          </div>
          <hr class="rule">
          <div class="task"><span class="chev-gap"></span><i class="cb"></i><div>어드민 통계 개발</div></div>
          <div class="tree">
            <div class="task"><span class="chev-gap"></span><i class="cb cb--on"><svg><use href="#check"/></svg></i><div class="done">UI 개발 &gt; 차트 테스트 (하드코딩 데이터 기준)</div></div>
          </div>
        </div>
        <span class="scroll scroll--bot"><i></i></span>
        <div class="statusbar"><span>0개 백링크</span><svg viewBox="0 0 32 32"><path d="M6 22L20 5l5 4-14 17-6 2zM8 30h20" fill="none" stroke="#a8a8a8" stroke-width="2.200"/></svg><span>650개 단어</span><span>3,933개 문자</span></div>
      </section>
    </div>
  </div>
</div>
</body>
</html>
```

FILE: styles.css
```css
* { box-sizing: border-box; }
html, body { margin: 0; padding: 0; }
body {
  position: relative;
  width: 3840px;
  height: 2160px;
  overflow: hidden;
  background: #141410;
  font-family: Roboto, "Noto Sans CJK KR", sans-serif;
}
.defs { position: absolute; width: 0; height: 0; }
.n-glyph { font: 700 20px "Liberation Serif", serif; text-anchor: middle; fill: #000; }
.cal-glyph { font: 500 18px Roboto, sans-serif; text-anchor: middle; fill: #fff; }

/* macOS menu bar */
.menubar {
  height: 48px;
  padding: 0 0 5px 42px;
  display: flex;
  align-items: center;
  gap: 44.400px;
  background: #4c4e40;
  color: #fff;
  font: 500 23px "Noto Sans CJK KR", sans-serif;
}
.apple { width: 25px; height: 30px; margin: 0 -2px 0 0; }
.menu-app { font: 700 26px "Inter", "Liberation Sans", sans-serif; letter-spacing: -0.8px; }
.status { margin-left: auto; padding-right: 38px; display: flex; align-items: center; }
.st-i { display: block; }
.st-chev { width: 14px; height: 26px; margin-right: 47px; }
.st-box { width: 31px; height: 26px; margin-right: 47px; }
.st-han { width: 44px; height: 40px; margin-right: 44px; border-radius: 5px; background: #fff; color: #222; font-size: 24px; line-height: 38px; text-align: center; }
.st-wifi { width: 36px; height: 30px; margin-right: 36px; }
.st-search { width: 27px; height: 27px; margin-right: 40px; }
.st-ctl { width: 28px; height: 28px; margin-right: 34px; }
.st-clock { width: 250px; white-space: nowrap; font-weight: 400; font-size: 27px; letter-spacing: 0.3px; }

/* windows on the desktop */
.window { position: absolute; top: 50px; height: 2108px; overflow: hidden; border-radius: 20px; }
.chrome { left: 0; width: 2559px; display: flex; flex-direction: column; background: #3c3c3c; }
.obsidian { left: 2560px; width: 1280px; display: flex; flex-direction: column; background: #1e1e1e; }

.lights { display: flex; gap: 17px; }
.lights i { width: 24px; height: 24px; border-radius: 50%; background: #4a4a4a; }
.lights .l-red { background: #ee6a5f; }
.lights .l-yel { background: #f5bd4f; }
.lights .l-grn { background: #61c454; }

/* chrome tab strip */
.tabstrip { height: 80px; padding-left: 179px; position: relative; display: flex; align-items: flex-start; background: #1f2020; }
.tabstrip .lights { position: absolute; left: 41px; top: 29px; }
.tab { position: relative; flex: none; width: 179px; height: 56px; margin-top: 12px; display: flex; align-items: center; padding: 2px 0 0 22px; color: #c7c7c7; font-size: 25px; white-space: nowrap; }
.tab::after { content: ""; position: absolute; right: 0; top: 12px; width: 2px; height: 32px; background: #3f4040; }
.fav { flex: none; width: 32px; height: 32px; }
.t-text { width: 42px; margin-left: 17px; overflow: hidden; -webkit-mask-image: linear-gradient(90deg, #000 55%, transparent); mask-image: linear-gradient(90deg, #000 55%, transparent); }
.t-wide { width: 88px; }
.t-short { width: 38px; }
.t-x { flex: none; width: 16px; height: 16px; margin-left: 15px; color: #c7c7c7; }
.tab--plain { width: 183px; padding-left: 23px; }
.tab--plain::after, .tab--active::after { display: none; }
.tab--active { width: 165px; height: 68px; padding: 0 0 10px 16px; background: #3c3c3c; border-radius: 20px 20px 0 0; color: #e4e4e4; }
.tab--active .t-x { margin-left: 24px; }
.tab--active::before { content: ""; position: absolute; left: -16px; right: -16px; bottom: 0; height: 16px; background: radial-gradient(circle 16px at 0 0, #1f2020 15.500px, #3c3c3c 16px) left / 16px 16px no-repeat, radial-gradient(circle 16px at 100% 0, #1f2020 15.500px, #3c3c3c 16px) right / 16px 16px no-repeat; }
.tab--lg { width: 185px; padding-left: 31px; }
.tab--k { width: 178px; padding-left: 24px; }
.tab--k .fav, .tab--lg .fav { width: 28px; }
.t-plus { width: 24px; height: 24px; margin: 28px 0 0 22px; flex: none; }
.t-down { position: absolute; left: 2492px; top: 12px; width: 55px; height: 55px; border-radius: 24px; background: #333; display: flex; align-items: center; justify-content: center; }
.t-down svg { width: 18px; height: 18px; }

/* chrome toolbar */
.toolbar { height: 92px; padding: 12px 0; display: flex; align-items: center; color: #c7c7c7; }
.tb-i { flex: none; width: 34px; height: 34px; }
.tb-back { margin-left: 28px; color: #c7c7c7; }
.tb-fwd { margin-left: 36px; color: #7a7a7a; }
.tb-reload { margin-left: 39px; }
.omnibox { flex: none; width: 1969px; height: 68px; margin-left: 36px; border-radius: 34px; background: #282828; display: flex; align-items: center; padding-left: 8px; }
.omni-site { width: 49px; height: 58px; border-radius: 29px; background: #3c3c3c; display: flex; align-items: center; justify-content: center; }
.omni-site svg { width: 26px; height: 26px; }
.omni-url { margin-left: 16px; color: #e3e3e3; font-size: 28.800px; white-space: nowrap; }
.omni-icons { margin-left: auto; padding-right: 29px; display: flex; gap: 30px; }
.omni-icons svg { width: 34px; height: 34px; }
.tb-cam { margin-left: 37px; }
.tb-ext { margin-left: 38px; }
.tb-sep { flex: none; width: 2px; height: 32px; margin-left: 36px; background: #5a5a5a; }
.tb-prof { margin-left: 36px; }
.tb-more { margin-left: 38px; }

/* bookmarks bar */
.bookmarks { height: 70px; padding: 0 0 14px 38px; display: flex; align-items: center; color: #c7c7c7; font-size: 24.500px; white-space: nowrap; border-bottom: 2px solid #2e2e2e; position: relative; }
.bm-apps { width: 28px; height: 28px; flex: none; }
.bm-sep { width: 2px; height: 32px; margin: 0 32px; background: #5a5a5a; }
.bm { display: flex; align-items: center; margin-right: 38px; }
.bm--tight { margin-right: 34px; }
.bm--long { margin-right: 51px; }
.bm-f { flex: none; width: 32px; height: 32px; margin-right: 17px; }
.bm--logo { font-size: 23.400px; }
.bm--logo .bm-f { margin-right: 11px; }
.bm--logo .bm-ph { height: 40px; margin-right: 12px; }
.bm-more { position: absolute; right: 56px; top: 16px; width: 24px; height: 24px; }

/* app */
.app { flex: 1; min-height: 0; display: flex; background: #474663; color: #e9e8ee; font: 400 18.600px/1.2 Roboto, "Noto Sans CJK KR", sans-serif; }
.side { flex: none; width: 375px; display: flex; flex-direction: column; background: #2f2d44; }
.side-title { height: 57px; margin: 0; text-align: center; font: 700 42.500px/57px "Noto Sans CJK KR", sans-serif; color: #fff; }
.side-nav { flex: 1; }
.nav { position: relative; isolation: isolate; height: 82.400px; display: flex; align-items: center; margin: 0 7px; padding-left: 12px; color: #b9b8c4; font-size: 21.400px; }
.nav svg { flex: none; width: 30px; height: 30px; margin-right: 45px; fill: #b9b8c4; }
.nav--on { color: #fff; }
.nav--on svg { fill: #fff; }
.nav--on::before { content: ""; position: absolute; z-index: -1; left: 0; right: 0; top: 10px; bottom: 13px; border: 1.500px solid #44437a; border-radius: 16px; background: linear-gradient(90deg, #3d3b63, #312f4c); }
.side-foot { height: 71px; border-top: 2px solid #4d4b60; display: flex; align-items: center; justify-content: flex-end; padding-right: 26px; }
.side-foot svg { width: 20px; height: 36px; }

.main { flex: 1; display: grid; grid-template-columns: 980px 946px; column-gap: 75px; padding-left: 75px; }
.col-left { padding-top: 59px; }
.search { height: 206px; display: flex; align-items: flex-start; }
.search-box { width: 204px; margin-right: 31px; }
.outlined { position: relative; height: 72px; padding: 24px 15px 0; border: 2px solid #8a899c; border-radius: 8px; font-size: 20px; line-height: 24px; }
.legend { position: absolute; left: 7px; top: -10px; padding: 0 6px; background: #474663; font-size: 14px; line-height: 16px; }
.counter { margin-top: 15px; padding-right: 14px; text-align: right; font-size: 18px; line-height: 22px; }
.btn { border: 0; border-radius: 8px; background: #2f2d44; color: #e9e8ee; font: 400 19px/1 "Noto Sans CJK KR", sans-serif; height: 61px; padding: 6px 0 0; }
.btn--a { width: 153px; margin: 20px 15px 0 0; }
.btn--b { width: 192px; margin: 20px 14px 0 0; }
.btn--edit { width: 154px; margin-right: 7px; padding-top: 0; }
.sec-head { display: flex; justify-content: space-between; align-items: center; min-height: 30px; padding-bottom: 14px; border-bottom: 3px solid #f2f1f5; font-size: 24px; line-height: 30px; font-weight: 500; }
.sec { margin-top: 40.700px; }
.sec--list { margin-top: 114px; }
.kv { display: grid; grid-template-columns: 231px 255px 231px 1fr; grid-auto-rows: minmax(40.500px, auto); align-items: center; padding-top: 7px; }
.kv--first { padding-top: 24px; grid-auto-rows: minmax(40.700px, auto); }
.kv .wide { grid-column: span 3; }
.kv .top { align-self: start; padding-top: 8px; }
.kv .addr { align-self: start; padding-top: 8px; white-space: nowrap; overflow: hidden; line-height: 25px; height: 66px; }
.tbl { width: 869px; height: 70px; padding-left: 37px; display: grid; grid-template-columns: 75px 200px 158px 155px 1fr; align-items: center; border-bottom: 2.500px solid #8f8ea3; }
.tbl--head { height: 86px; }

.col-right { padding-top: 250px; }
.form { height: 1494px; overflow: hidden; }
.frow { height: 63.600px; display: flex; align-items: center; justify-content: space-between; }
.frow:first-child { margin-top: -50.600px; }
.frow label { padding-top: 4px; }
.field { position: relative; width: 305px; height: 54px; padding: 0 29px 0 7px; display: flex; align-items: center; justify-content: space-between; background: #fff; border: 2px solid #7c7b8a; border-radius: 9px; }
.field--focus { border: 3px solid #5a4aa0; }
.val { width: 232px; white-space: nowrap; overflow: hidden; color: #35353c; font: 400 16.500px/30px "Liberation Mono", "Noto Sans CJK KR", monospace; letter-spacing: 0.7px; word-spacing: -3px; display: block; -webkit-mask-image: linear-gradient(90deg, #000 94%, transparent); mask-image: linear-gradient(90deg, #000 94%, transparent); }
.val-inline { vertical-align: middle; }
.val u { text-decoration-thickness: 1px; }
.caret { display: inline-block; width: 3px; height: 30px; margin-left: 1px; vertical-align: middle; background: #5a4aa0; }
.clr { flex: none; width: 24px; height: 24px; margin-right: -11px; }

/* obsidian */
.ob-bar { position: relative; height: 72px; flex: none; padding-left: 21px; display: flex; align-items: flex-end; background: #262626; border-bottom: 2px solid #333; color: #999; }
.ob-bar .lights { position: absolute; left: 26px; top: 24px; gap: 16px; }
.ob-bar .lights i { background: #484848; }
.ob-ic { position: absolute; width: 34px; height: 34px; top: 19px; color: #aaa; }
.ob-panel { left: 171px; }
.ob-panel-r { right: 25px; }
.ob-tabs { margin-left: 212px; display: flex; height: 60px; }
.ob-tab { position: relative; flex: none; width: 120.400px; height: 60px; padding: 4px 0 0 18px; display: flex; align-items: center; color: #8a8a8a; white-space: nowrap; font: 400 24px "Inter", "Noto Sans CJK KR", sans-serif; letter-spacing: -0.3px; }
.ob-tab::after { content: ""; position: absolute; right: 0; top: 14px; height: 36px; width: 1.500px; background: #404040; }
.ob-tab--pre::after, .ob-tab--on::after { display: none; }
.ob-tab--on { color: #dadada; background: #1e1e1e; border: 2px solid #333; border-bottom: 0; border-radius: 14px 14px 0 0; margin-bottom: -2px; height: 62px; }
.ob-x { width: 17px; height: 17px; margin-left: auto; margin-right: 21px; color: #bbb; }
.ob-plus { position: absolute; left: 1098px; top: 24px; width: 24px; height: 24px; }
.ob-down { position: absolute; left: 1170px; top: 27px; width: 20px; height: 20px; }
.ob-body { flex: 1; min-height: 0; display: flex; }
.ribbon { flex: none; width: 79px; padding-top: 22px; display: flex; flex-direction: column; align-items: center; gap: 24.400px; color: #a0a0a0; border-right: 2px solid #2c2c2c; background: linear-gradient(90deg, #181818, #1e1e1e 60%); }
.ribbon svg { width: 34px; height: 34px; }
.panes { flex: 1; min-width: 0; display: flex; flex-direction: column; }
.pane { position: relative; overflow: hidden; }
.pane--top { flex: none; height: 549px; }
.pane--bot { flex: 1; min-height: 0; }
.pane-tabs { position: relative; height: 74px; padding-left: 34px; display: flex; align-items: flex-end; background: #262626; border-top: 2px solid #333; border-bottom: 2px solid #333; }
.ob-tab--b { width: 127.500px; padding-left: 16px; height: 62px; }
.ob-plus--b { left: 1075px; top: 18px; }
.ob-down--b { left: 1146px; top: 20px; }
.pane-nav { position: relative; height: 66px; padding: 0 34px 0 32px; display: flex; align-items: center; color: #aaa; }
.pane-nav--b { height: 70px; }
.p-nav { width: 30px; height: 30px; margin-right: 20px; color: #666; }
.p-title { position: absolute; left: 1px; width: 1201px; text-align: center; font: 400 24px "Inter", "Noto Sans CJK KR", sans-serif; color: #b4b4b4; letter-spacing: -0.4px; }
.p-i { position: relative; width: 32px; height: 32px; margin-left: auto; margin-right: 18px; color: #aaa; }
.p-dots { margin-left: 0; margin-right: 0; width: 30px; }
.doc { padding: 58px 40px 0 41px; width: 1172px; color: #dadada; font: 400 28.300px/43px "Inter", "Noto Sans CJK KR", sans-serif; letter-spacing: -0.3px; }
.doc--b { padding-top: 59px; }
.doc-h { margin: 0 0 24px 19px; height: 64px; font: 700 52px/64px "Inter", "Noto Sans CJK KR", sans-serif; letter-spacing: -1.300px; color: #dadada; }
.doc--b .doc-h { margin-bottom: 25px; }
.bq { margin: 0 0 0 19px; padding-left: 23px; border-left: 3px solid #7c5ce8; line-height: 44px; }
.bq--gap { margin-top: 45px; }
.task { display: flex; margin-top: 5.600px; white-space: nowrap; }
.bq + .task { margin-top: 3.600px; }
.bq + .task--big { margin-top: 46px; }
.task--big { margin-top: 47px; }
.chev, .chev-gap { flex: none; width: 33px; height: 43px; padding: 11px 17px 10px 2px; }
.cb { flex: none; width: 28px; height: 28px; margin: 8px 14px 0 0; border: 1.500px solid #5c5c5c; border-radius: 7px; display: block; }
.cb--on { background: #7c5ce8; border-color: #7c5ce8; }
.cb--on svg { display: block; width: 25px; height: 25px; }
.more { font-style: normal; color: #777; font-size: 21px; line-height: 1; margin-left: 16px; letter-spacing: 1px; }
mark { background: #6f5f2e; color: #dadada; }
.done { color: #8f8f8f; text-decoration: line-through; }
.done mark { color: #a8a8a8; text-decoration: line-through; }
.link { color: #a88bfa; text-decoration: underline; }
.ext { width: 24px; height: 24px; margin-left: 2px; vertical-align: -3px; }
.sp { text-decoration: underline dotted #c8473c 2px; text-underline-offset: 5px; }
.tree { margin-left: 46px; padding-left: 19px; border-left: 1px solid #333; }
.tree--2 { margin-left: 45px; }
.rule { height: 3px; margin: 68px 0 0 19px; width: 1052px; border: 0; background: #333; }
.rule + .task { margin-top: 66px; }
.scroll { position: absolute; right: 0; width: 29px; border-left: 2px solid #333; bottom: 0; padding: 6px 5px 0 6px; }
.scroll i { display: block; width: 17px; border-radius: 9px; background: #444; }
.scroll--top { top: 66px; }
.scroll--top i { height: 234px; }
.scroll--bot { top: 143px; }
.scroll--bot i { height: 542px; }
.statusbar { position: absolute; right: 0; bottom: 0; width: 449px; height: 45px; padding-left: 16px; display: flex; align-items: center; gap: 14px; background: #262626; border: 2px solid #333; border-width: 2px 0 0 2px; border-radius: 14px 0 0 0; color: #a8a8a8; font: 400 21px "Inter", "Noto Sans CJK KR", sans-serif; letter-spacing: -0.3px; white-space: nowrap; }
.statusbar svg { width: 28px; height: 28px; margin: 0 9px 0 6px; }
```
